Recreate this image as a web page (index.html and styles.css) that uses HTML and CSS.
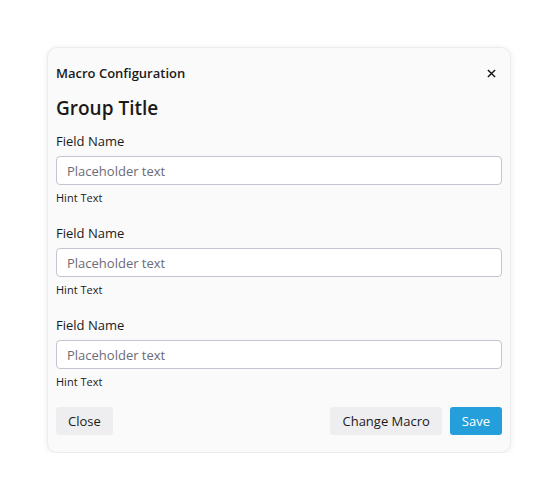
FILE: index.html
```html
<!DOCTYPE html>
<html lang="en">
<head>
  <meta charset="UTF-8" />
  <title>Macro Configuration</title>
  <link rel="stylesheet" href="styles.css">
</head>
<body>
  <div class="dialog">
    <div class="dialog-header">
      <div class="dialog-title">Macro Configuration</div>
      <button class="close-x" aria-label="Close">
        <svg viewBox="0 0 10 10"><path d="M1 1L9 9M9 1L1 9"/></svg>
      </button>
    </div>

    <h2 class="group-title">Group Title</h2>

    <div class="field">
      <label>Field Name</label>
      <input type="text" placeholder="Placeholder text" />
      <div class="hint">Hint Text</div>
    </div>

    <div class="field">
      <label>Field Name</label>
      <input type="text" placeholder="Placeholder text" />
      <div class="hint">Hint Text</div>
    </div>

    <div class="field">
      <label>Field Name</label>
      <input type="text" placeholder="Placeholder text" />
      <div class="hint">Hint Text</div>
    </div>

    <div class="dialog-footer">
      <button class="button">Close</button>
      <div class="footer-right">
        <button class="button">Change Macro</button>
        <button class="button primary">Save</button>
      </div>
    </div>
  </div>
</body>
</html>
```

FILE: styles.css
```css
body {
  background: #fff;
  color: #1a1a1a;
  font-family: 'Open Sans', sans-serif;
  margin: 0;
  padding: 47px 48px 0 47px;
}

.dialog {
  width: 464px;
  box-sizing: border-box;
  background: #fafafa;
  border: 1px solid #ececec;
  border-radius: 10px;
  box-shadow: 0 1px 6px rgba(0, 0, 0, 0.08);
  padding: 8px 8px 17px;
}

.dialog-header {
  display: flex;
  justify-content: space-between;
  align-items: center;
  height: 34px;
}

.dialog-title {
  font-size: 13px;
  font-weight: 600;
}

.close-x {
  background: none;
  border: none;
  padding: 0;
  margin-right: 4px;
  width: 14px;
  height: 14px;
  display: flex;
  align-items: center;
  justify-content: center;
  cursor: pointer;
}

.close-x svg {
  width: 9px;
  height: 9px;
  stroke: #111;
  stroke-width: 1.5;
  fill: none;
}

.group-title {
  font-size: 19px;
  font-weight: 600;
  line-height: 28px;
  margin: 4px 0 9px;
}

.field {
  margin-bottom: 17px;
}

label {
  display: block;
  font-size: 13px;
  line-height: 20px;
  margin-bottom: 5px;
}

input {
  display: block;
  width: 100%;
  height: 29px;
  box-sizing: border-box;
  padding: 0 10px;
  font-family: inherit;
  font-size: 13px;
  color: #1a1a1a;
  background: #fff;
  border: 1px solid #c4c4d2;
  border-radius: 4px;
}

input::placeholder {
  color: #6b6b78;
}

.hint {
  font-size: 11px;
  line-height: 16px;
  margin-top: 5px;
}

.dialog-footer {
  display: flex;
  justify-content: space-between;
}

.footer-right {
  display: flex;
  gap: 8px;
}

.button {
  height: 28px;
  padding: 0 12px;
  font-family: inherit;
  font-size: 13px;
  color: #1a1a1a;
  background: #eeeef0;
  border: none;
  border-radius: 3px;
  cursor: pointer;
}

.button.primary {
  background: #249fdb;
  color: #fff;
}
```
